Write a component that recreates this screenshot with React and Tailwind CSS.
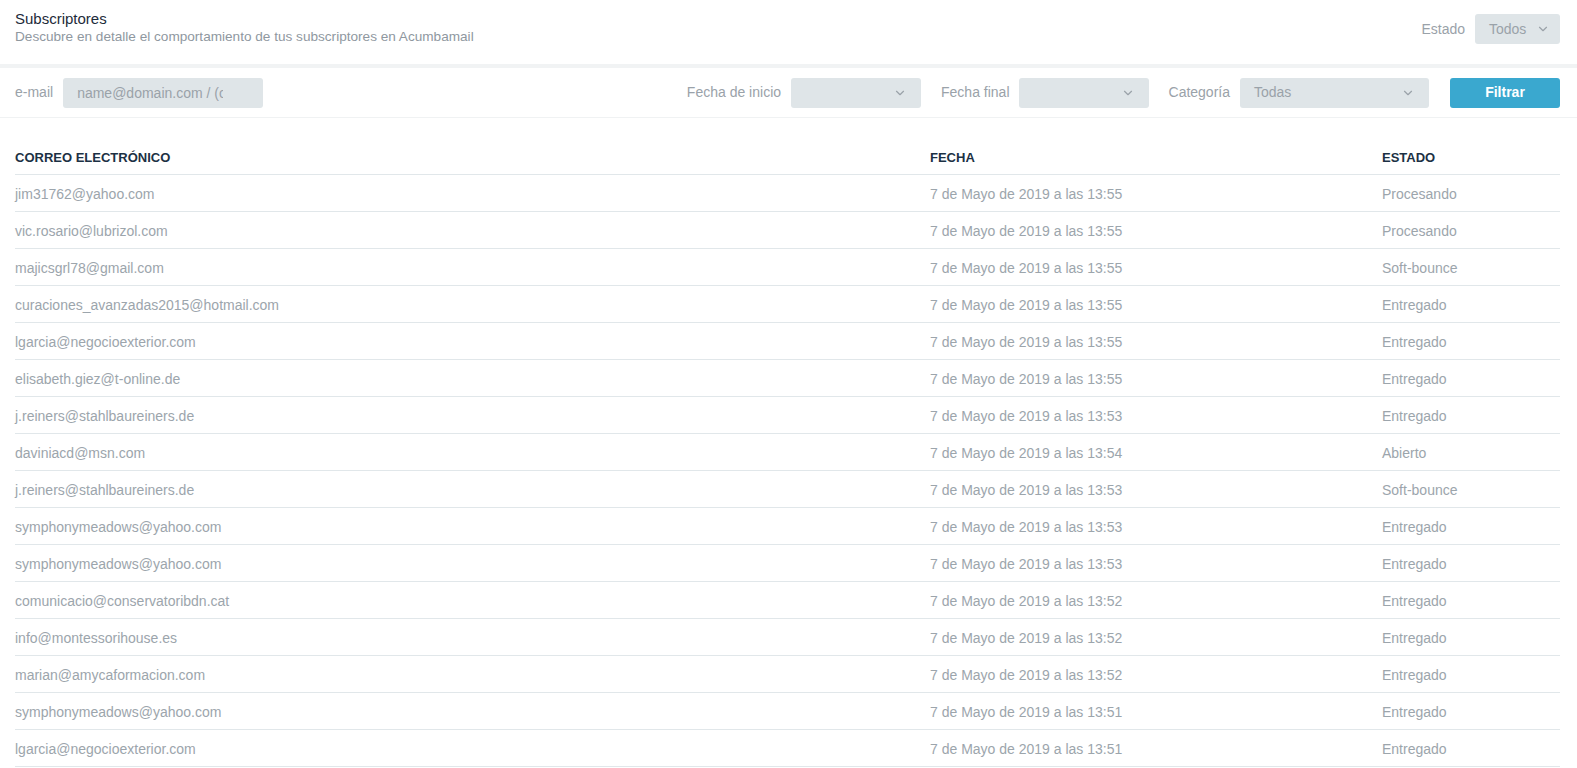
import React from 'react'
import { ChevronDown } from 'lucide-react'

const rows = [
    ["jim31762@yahoo.com", "7 de Mayo de 2019 a las 13:55", "Procesando"],
    ["vic.rosario@lubrizol.com", "7 de Mayo de 2019 a las 13:55", "Procesando"],
    ["majicsgrl78@gmail.com", "7 de Mayo de 2019 a las 13:55", "Soft-bounce"],
    ["curaciones_avanzadas2015@hotmail.com", "7 de Mayo de 2019 a las 13:55", "Entregado"],
    ["lgarcia@negocioexterior.com", "7 de Mayo de 2019 a las 13:55", "Entregado"],
    ["elisabeth.giez@t-online.de", "7 de Mayo de 2019 a las 13:55", "Entregado"],
    ["j.reiners@stahlbaureiners.de", "7 de Mayo de 2019 a las 13:53", "Entregado"],
    ["daviniacd@msn.com", "7 de Mayo de 2019 a las 13:54", "Abierto"],
    ["j.reiners@stahlbaureiners.de", "7 de Mayo de 2019 a las 13:53", "Soft-bounce"],
    ["symphonymeadows@yahoo.com", "7 de Mayo de 2019 a las 13:53", "Entregado"],
    ["symphonymeadows@yahoo.com", "7 de Mayo de 2019 a las 13:53", "Entregado"],
    ["comunicacio@conservatoribdn.cat", "7 de Mayo de 2019 a las 13:52", "Entregado"],
    ["info@montessorihouse.es", "7 de Mayo de 2019 a las 13:52", "Entregado"],
    ["marian@amycaformacion.com", "7 de Mayo de 2019 a las 13:52", "Entregado"],
    ["symphonymeadows@yahoo.com", "7 de Mayo de 2019 a las 13:51", "Entregado"],
    ["lgarcia@negocioexterior.com", "7 de Mayo de 2019 a las 13:51", "Entregado"],
]

const Select = ({ width, value }) => (
    <div className={`${width} h-[30px] rounded-[3px] bg-[#dfe5e8] flex items-center justify-between pl-[14px] pr-[14px] text-[14px] text-[#9aa2a9]`}>
        <span>{value}</span>
        <ChevronDown size={14} strokeWidth={2} className="text-[#9aa2a9]" />
    </div>
)

const App = () => {
    return (
        <div className="min-h-screen bg-white font-['Liberation_Sans',Arial,sans-serif]">
            {/* cabecera */}
            <div className="h-[64px] flex items-start justify-between pl-[15px] pr-[17px]">
                <div className="pt-[10px]">
                    <h1 className="text-[15px] leading-[18px] text-[#1d2b3a]">Subscriptores</h1>
                    <p className="text-[13.6px] leading-[17px] text-[#8f989f]">Descubre en detalle el comportamiento de tus subscriptores en Acumbamail</p>
                </div>
                <div className="flex items-center gap-[10px] pt-[14px]">
                    <span className="text-[14px] text-[#9aa2a9]">Estado</span>
                    <div className="w-[85px] h-[30px] rounded-[3px] bg-[#dfe5e8] flex items-center justify-between pl-[14px] pr-[10px] text-[14px] text-[#9aa2a9]">
                        <span>Todos</span>
                        <ChevronDown size={14} strokeWidth={2} />
                    </div>
                </div>
            </div>
            <div className="h-[4px] bg-[#f1f3f4]" />

            {/* filtros */}
            <div className="h-[50px] flex items-center pl-[15px] pr-[17px] border-b border-[#f0f2f3]">
                <span className="text-[14px] text-[#9aa2a9] mr-[10px]">e-mail</span>
                <input
                    type="text"
                    placeholder="name@domain.com / (código)"
                    className="w-[200px] h-[30px] rounded-[3px] bg-[#dfe5e8] pl-[14px] pr-[40px] text-[14px] outline-none placeholder:text-[#9aa2a9]"
                />
                <div className="flex-1" />
                <span className="text-[14px] text-[#9aa2a9] mr-[10px]">Fecha de inicio</span>
                <Select width="w-[130px]" value="" />
                <span className="text-[14px] text-[#9aa2a9] ml-[20px] mr-[9px]">Fecha final</span>
                <Select width="w-[130px]" value="" />
                <span className="text-[14px] text-[#9aa2a9] ml-[20px] mr-[10px]">Categoría</span>
                <Select width="w-[189px]" value="Todas" />
                <button className="ml-[21px] w-[110px] h-[30px] rounded-[3px] bg-[#3aa8cf] text-white text-[14px] font-bold">
                    Filtrar
                </button>
            </div>

            {/* tabla */}
            <div className="pl-[15px] pr-[17px] pt-[20px]">
                <div className="grid grid-cols-[915px_452px_1fr] h-[37px] items-center pt-[3px] border-b border-[#e1e7ea] text-[13px] font-bold text-[#1c3144]">
                    <span>CORREO ELECTRÓNICO</span>
                    <span>FECHA</span>
                    <span>ESTADO</span>
                </div>
                {rows.map((r, i) => (
                    <div key={i} className="grid grid-cols-[915px_452px_1fr] h-[37px] items-center pt-[2px] border-b border-[#e1e7ea] text-[14px] text-[#9ca5ac]">
                        <span>{r[0]}</span>
                        <span>{r[1]}</span>
                        <span>{r[2]}</span>
                    </div>
                ))}
            </div>
        </div>
    )
}

export default App
